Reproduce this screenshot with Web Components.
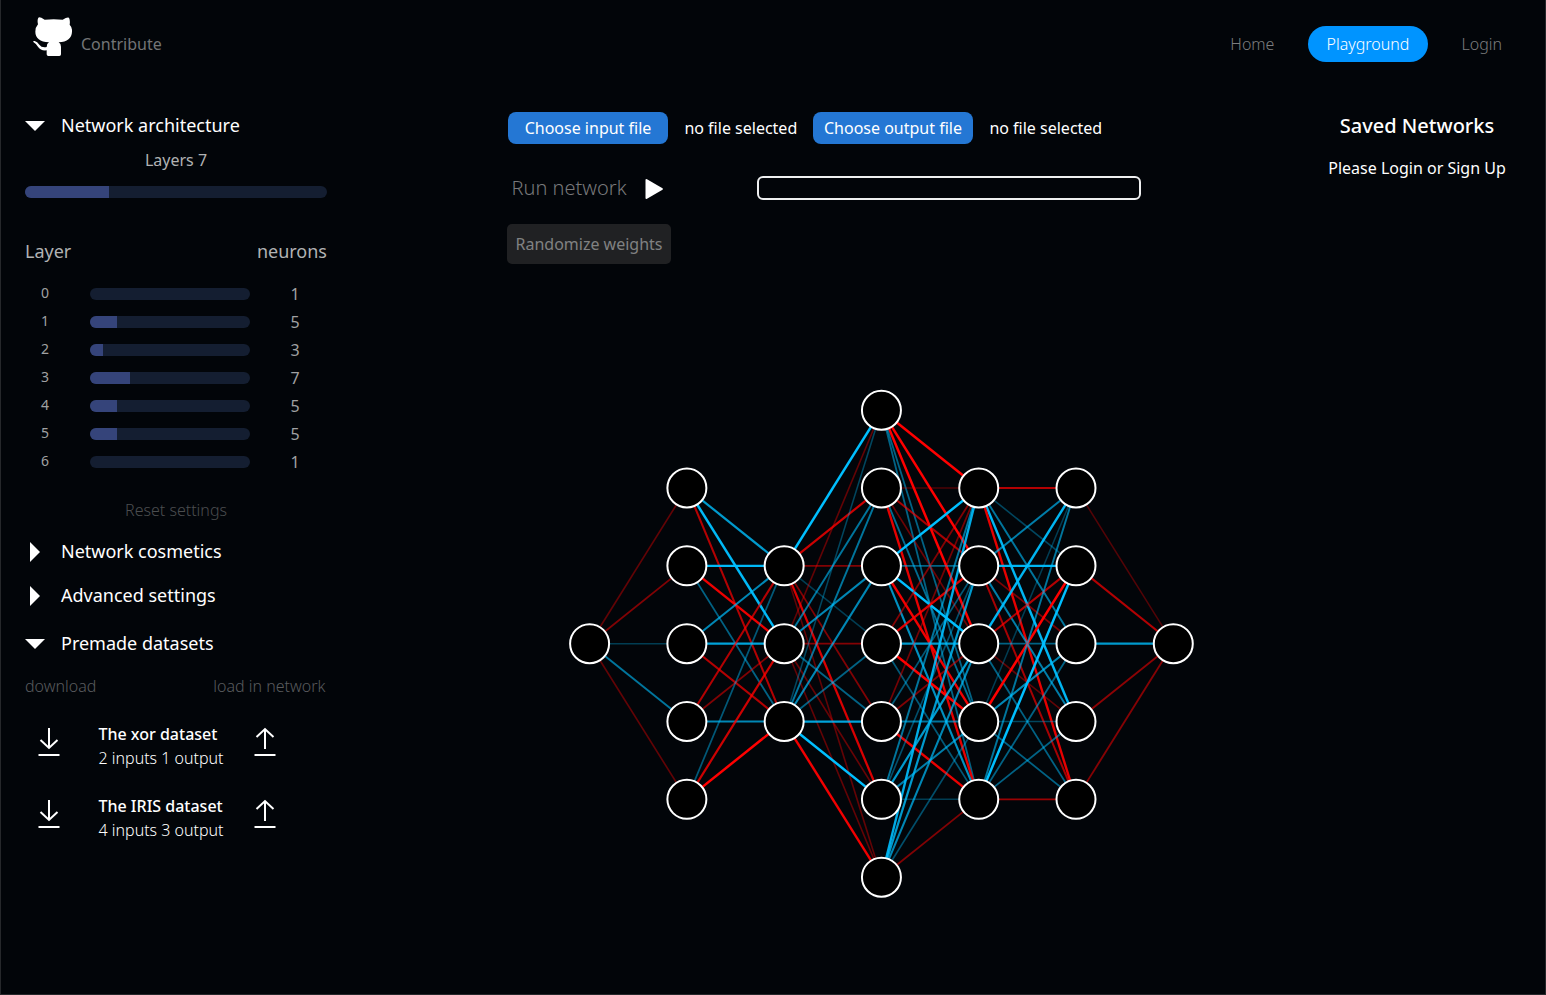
<!DOCTYPE html>
<html lang="en"><head><meta charset="utf-8"><title>Playground</title>
<style>html,body{margin:0;background:#020509}body{height:995px;overflow:hidden;font-family:"Noto Sans",sans-serif;font-size:16px;color:#fff}</style></head>
<body><playground-app></playground-app>
<script>
const define = (name, html, after) => {
  const tpl = document.createElement('template');
  tpl.innerHTML = html;
  customElements.define(name, class extends HTMLElement {
    connectedCallback() {
      if (this.shadowRoot) return;
      this.attachShadow({mode: 'open'}).append(tpl.content.cloneNode(true));
      if (after) after(this, this.shadowRoot);
    }
  });
};

define('github-link', `<style>:host{display:flex;align-items:flex-start;color:#737476}svg{width:40px;height:40px;margin:17px 9px 0 31px}span{line-height:24px;margin-top:32px}</style>
<svg viewBox="96 51 120 120"><path fill="#fff" d="M115 53Q118 49 134 59Q161 56 188 59Q202 50 207 53Q211 61 209 74Q217 82 216 95Q215 124 176 127Q183 131 183 140V163Q183 168 178 168H145Q140 168 140 163V151Q122 153 115 142Q110 132 100 126Q98 122 104 123Q112 125 118 134Q125 144 140 141Q140 131 147 127Q106 124 106 95Q106 82 114 73Q111 60 115 53Z"/></svg><span><slot></slot></span>`);

define('nav-link', `<style>:host{display:block;box-sizing:border-box;height:36px;line-height:36px;border-radius:18px;padding:0 17.5px;font-weight:350;color:#7c7d7f;white-space:nowrap}:host([active]){background:#0094ff;color:#fff;width:120px;padding:0;text-align:center}</style><slot></slot>`);

define('top-bar', `<style>:host{display:flex;justify-content:space-between;height:88px}nav{display:flex;gap:16px;margin:26px 25.5px 0 0}</style>
<github-link>Contribute</github-link><nav><nav-link>Home</nav-link><nav-link active>Playground</nav-link><nav-link>Login</nav-link></nav>`);

define('section-title', `<style>:host{display:flex;align-items:center;height:28px;font-size:18px;line-height:28px}svg{width:20px;height:20px;margin-right:16px}span{margin-top:-2px}:host([open]) svg{transform:rotate(90deg)}</style>
<svg viewBox="0 0 20 20"><path fill="#fff" d="M5 0L15 10L5 20Z"/></svg><span><slot></slot></span>`);

define('range-bar', `<style>:host{display:block;height:12px;border-radius:6px;background:#141e31;overflow:hidden}i{display:block;height:12px;background:#35447a}</style><i></i>`,
  (el, root) => root.querySelector('i').style.width = el.getAttribute('fill') + 'px');

define('layer-row', `<style>:host{display:grid;grid-template-columns:65px 160px 77px;height:28px;align-items:center;color:#a0a1a2}b,span{font-weight:400}b{font-size:14px;line-height:20px;padding-left:16px;margin-top:-2px}span{line-height:24px;padding-left:40.5px}</style><b></b><range-bar></range-bar><span></span>`,
  (el, root) => {
    const [index, fill, count] = el.getAttribute('values').split(' ');
    root.querySelector('b').textContent = index;
    root.querySelector('span').textContent = count;
    const bar = root.querySelector('range-bar');
    bar.shadowRoot.querySelector('i').style.width = fill + 'px';
  });

define('dataset-row', `<style>:host{display:grid;grid-template-columns:73px 142px 50px;height:48px;margin-bottom:24px;line-height:24px}svg{width:24px;height:32px;fill:none;stroke:#fff;stroke-width:2;margin-top:4px}.down{margin-left:12px}div{padding-left:.5px;white-space:nowrap}b{display:block;font-weight:500}span{font-weight:300}.up{margin-left:13px}</style>
<svg class="down" viewBox="0 0 24 32"><path d="M12 2V22M3.5 14L12 22L20.5 14M1.5 29H22.5"/></svg><div><b><slot name="name"></slot></b><span><slot></slot></span></div><svg class="up" viewBox="0 0 24 32"><path d="M12 23V3M3.5 11L12 3L20.5 11M1.5 29H22.5"/></svg>`);

define('settings-panel', `<style>:host{display:block;padding:24px 0 0 25px;width:302px}p{margin:0;line-height:24px}.count{text-align:center;color:#b1b2b3;margin:8px 0 14px}.heads{display:flex;justify-content:space-between;font-size:18px;line-height:28px;color:#b1b2b3;margin:39px 0 15px}.reset{text-align:center;font-weight:300;color:#4b4d4f;margin:22px 0 16px}.labels{display:flex;justify-content:space-between;font-weight:300;color:#595b5e;margin:16px 1.5px 23.5px 0}#adv{margin:16px 0 20px}</style>
<section-title open>Network architecture</section-title><p class="count">Layers 7</p><range-bar fill="84"></range-bar>
<div class="heads"><span>Layer</span><span>neurons</span></div>
<layer-row values="0 0 1"></layer-row><layer-row values="1 27 5"></layer-row><layer-row values="2 13 3"></layer-row><layer-row values="3 40 7"></layer-row><layer-row values="4 27 5"></layer-row><layer-row values="5 27 5"></layer-row><layer-row values="6 0 1"></layer-row>
<p class="reset">Reset settings</p>
<section-title>Network cosmetics</section-title><section-title id="adv">Advanced settings</section-title><section-title open>Premade datasets</section-title>
<div class="labels"><p>download</p><p>load in network</p></div>
<dataset-row><span slot="name">The xor dataset</span>2 inputs 1 output</dataset-row><dataset-row><span slot="name">The IRIS dataset</span>4 inputs 3 output</dataset-row>`);

define('file-picker', `<style>:host{display:flex;height:32px;line-height:32px;white-space:nowrap}b{font-weight:400;width:160px;border-radius:8px;background:#2477d4;text-align:center;margin-right:16.4px}span{width:128.6px}</style><b><slot></slot></b><span>no file selected</span>`);

define('run-controls', `<style>:host{display:block;padding:24px 0 0 1px;height:176px;box-sizing:border-box}.files{display:flex}.run{display:flex;align-items:center;height:32px;margin:28px 0 20px 3.5px}.run span{font-size:20px;line-height:28px;font-weight:300;color:#77787a;width:133px;white-space:nowrap}.run svg{width:19px;height:22px;margin-top:1px}.bar{box-sizing:border-box;width:384px;height:24px;border:2px solid #eeeff0;border-radius:6px;margin-left:93.5px}.rand{width:164px;height:40px;line-height:40px;border-radius:5px;background:#202123;color:#808182;text-align:center;margin-left:-1px}</style>
<div class="files"><file-picker>Choose input file</file-picker><file-picker>Choose output file</file-picker></div>
<div class="run"><span>Run network</span><svg viewBox="0 0 19 22"><path fill="#fff" d="M.5 2Q.5.5 2 1.2L17.5 10.2Q18.5 11 17.5 11.8L2 20.8Q.5 21.5.5 20Z"/></svg><div class="bar"></div></div><div class="rand">Randomize weights</div>`);

// Connection weights, one matrix per gap between layers: red is negative, blue is positive.
const weights = [
  [[-.38,-.5,.3,.6,-.38]],
  [[.8,.97,-.7],[.97,-.93,.5],[.7,.85,-.7],[-.7,-.5,.7],[.45,-.8,-1]],
  [[1,-.8,-.5,.3,-.5,-.85,-.38],[-.38,.6,.7,-.52,.5,-.4,-.38],[.35,.6,.7,.5,.85,1,-.95]],
  [[-1,-1,-1,.5,.5],[-.3,-.65,-.42,.55,-.9],[1,.5,1,-.95,.75],[-.5,-.88,.8,-1,.45],[-.45,.45,-.5,.6,-.92],[.6,.4,.8,.65,.3],[.9,.8,.7,.4,-.5]],
  [[-.7,.35,.6,.95,-.9],[.65,.95,-.48,.65,-.65],[.95,-.7,.5,-.38,.5],[.3,-1,.7,.35,.5],[.6,1,.5,.5,-.6]],
  [[-.32],[-.7],[.8],[-.55],[-.52]]
];
define('neural-network', `<style>:host{display:block}svg{display:block;width:692px;height:720px}circle{fill:#000;stroke:#fff;stroke-width:2}</style><svg viewBox="507 264 692 720"></svg>`, (el, root) => {
  const sizes = [1,5,3,7,5,5,1];
  const point = (l, i) => [589.6 + l * 97.28, 643.7 + (i - (sizes[l] - 1) / 2) * 77.83];
  let out = '';
  weights.forEach((m, l) => m.forEach((row, i) => row.forEach((w, j) => {
    const [a, b] = point(l, i), [c, d] = point(l + 1, j), s = Math.abs(w);
    out += `<line x1="${a}" y1="${b}" x2="${c}" y2="${d}" stroke="${w < 0 ? '#f00' : '#00bfff'}" stroke-opacity="${s}" stroke-width="${1.1 + s * 1.4}"/>`;
  })));
  sizes.forEach((n, l) => { for (let i = 0; i < n; i++) { const [x, y] = point(l, i); out += `<circle cx="${x}" cy="${y}" r="19.5"/>`; } });
  root.querySelector('svg').innerHTML = out;
});

define('saved-networks', `<style>:host{display:block;text-align:center;padding-top:24px}h2{margin:0;font-size:20px;line-height:28px;font-weight:500}p{margin:16px 0 0;line-height:24px}</style><h2>Saved Networks</h2><p>Please Login or Sign Up</p>`);

define('playground-app', `<style>:host{display:block;box-sizing:border-box;width:1546px;height:995px;border:1px solid #26282b;border-top:0;background:#020509}main{display:grid;grid-template-columns:506px 782px 256px}settings-panel{margin-left:-1px}saved-networks{width:256px}</style>
<top-bar></top-bar><main><settings-panel></settings-panel><div><run-controls></run-controls><neural-network></neural-network></div><saved-networks></saved-networks></main>`);
</script></body></html>
